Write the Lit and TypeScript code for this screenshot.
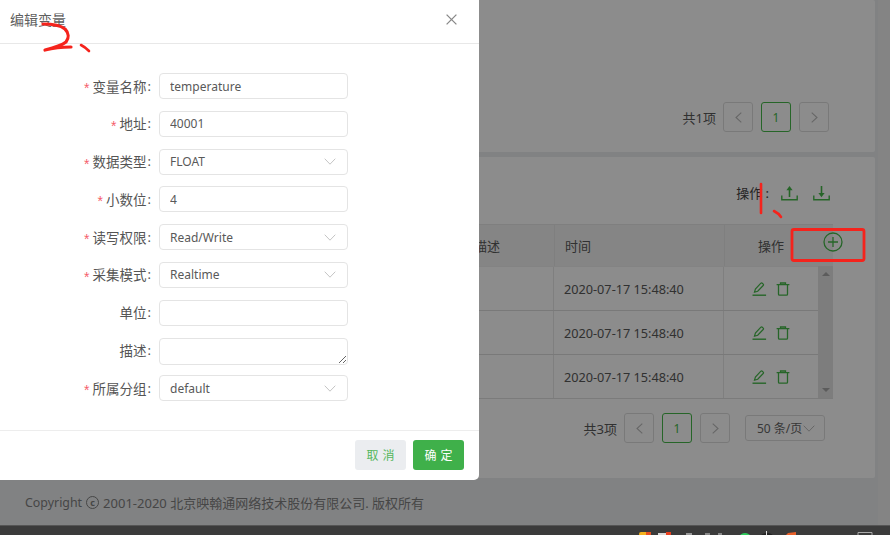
import { LitElement, html, css, svg } from "lit";
import { customElement } from "lit/decorators.js";

const chevron = html`<svg class="chev" viewBox="0 0 12 7"><path d="M.7.7 6 6.2 11.3.7" fill="none" stroke="currentColor" stroke-width="1"/></svg>`;
const arrowL = html`<svg class="arr" viewBox="0 0 7 11"><path d="M6.300.6 1 5.500l5.300 4.900" fill="none" stroke="currentColor" stroke-width="1.1"/></svg>`;
const arrowR = html`<svg class="arr" viewBox="0 0 7 11"><path d="M.7.6 6 5.500.7 10.400" fill="none" stroke="currentColor" stroke-width="1.1"/></svg>`;
const edit = html`<svg class="ico" viewBox="0 0 15 14"><path d="M2.5 10.2 3.4 7 8.9 1.2a1 1 0 0 1 1.4 0l.9.9a1 1 0 0 1 0 1.4L5.7 9.2z" fill="none" stroke="currentColor" stroke-width="1.2"/><path d="M.5 13.2h13.6" stroke="currentColor" stroke-width="1.4"/></svg>`;
const trash = html`<svg class="ico trash" viewBox="0 0 14 14"><path d="M.6 2.600h12.800M4.500 2.400V1h5v1.400M2.500 2.800v9.400a1 1 0 0 0 1 1h7a1 1 0 0 0 1-1V2.800" fill="none" stroke="currentColor" stroke-width="1.3"/></svg>`;
const upload = html`<svg class="tool" viewBox="0 0 17 16"><path d="M8.500 12V3" stroke="currentColor" stroke-width="1.600"/><path d="M5.400 5.200 8.500 1l3.100 4.200z" fill="currentColor"/><path d="M.8 10.500v4.200h15.400v-4.200" fill="none" stroke="currentColor" stroke-width="1.400"/></svg>`;
const download = html`<svg class="tool" viewBox="0 0 17 16"><path d="M8.500 1v8" stroke="currentColor" stroke-width="1.600"/><path d="M5.400 8 8.500 12.200 11.600 8z" fill="currentColor"/><path d="M.8 10.500v4.200h15.400v-4.200" fill="none" stroke="currentColor" stroke-width="1.400"/></svg>`;

@customElement("app-root")
export class AppRoot extends LitElement {
  static styles = css`
    :host { display: block; width: 890px; height: 535px; position: relative; overflow: hidden;
      font-family: "Noto Sans", "Noto Sans CJK SC", sans-serif; color: #595959; font-size: 12px; }
    * { box-sizing: border-box; }
    .page { height: 525px; background: linear-gradient(to right, #ebedef 878px, #f0f0f0 878px); display: flex; flex-direction: column; padding-right: 15px; padding-left: 20px; }
    .card { background: #fff; border-radius: 2px; }
    .card1 { height: 152px; display: flex; justify-content: flex-end; align-items: flex-end; padding: 0 46px 20px 0; }
    .card2 { height: 321px; margin-top: 5px; padding: 26px 42px 0 0; display: flex; flex-direction: column; }
    .foot { flex: 1; display: flex; align-items: center; padding: 2px 0 0 5px; font-size: 13px; color: #808080; white-space: nowrap; }
    .foot .en { font-size: 12.4px; }
    .foot .c { width: 13px; height: 13px; border: 1.4px solid #808080; border-radius: 50%; display: flex; align-items: center; justify-content: center; font-size: 9px; font-weight: 700; line-height: 1; margin: 0 4px 0 4px; padding-bottom: 1px; }
    .pager { display: flex; align-items: center; font-size: 13px; }
    .pager .total { margin-right: 7px; }
    .pbtn { width: 30px; height: 30px; border: 1px solid #ddd; border-radius: 3px; margin-right: 8px; display: flex; align-items: center; justify-content: center; color: #bbb; }
    .pbtn:last-child { margin-right: 0; }
    .pbtn.on { border-color: #46b94a; color: #46b94a; font-size: 12px; }
    .arr { width: 7px; height: 11px; }
    .size { width: 80px; height: 26px; border: 1px solid #ddd; border-radius: 3px; margin-left: 7px; display: flex; align-items: center; padding-left: 11px; white-space: nowrap; font-size: 12px; color: #666; }
    .size .chev { width: 12px; height: 7px; color: #bbb; margin-left: 1px; flex: none; }
    .tools { height: 20px; display: flex; justify-content: flex-end; align-items: center; color: #444; font-size: 13px; margin-right: 3px; margin-bottom: 21px; }
    .tools span { margin-right: 12px; margin-top: -1px; }
    .tool { width: 17px; height: 16px; color: #46b94a; margin-left: 15px; }
    .tool:first-of-type { margin-left: 0; }
    .row { display: grid; grid-template-columns: 1fr 91px 170px 94px; }
    .head { grid-template-columns: 1fr 91px 170px 108px; height: 42px; background: #f2f2f2; border-top: 1px solid #e8e8e8; font-size: 13px; }
    .cell { border-right: 1px solid #e8e8e8; display: flex; align-items: center; padding-left: 10px; }
    .cell:last-child { border-right: 0; }
    .head .last { position: relative; justify-content: flex-end; padding: 0 49px 0 0; }
    .plus { position: absolute; left: 98px; top: 7px; width: 20px; height: 20px; color: #46b94a; }
    .tbody { display: flex; height: 133px; border-bottom: 1px solid #e0e0e0; }
    .rows { flex: 1; }
    .tr { height: 44px; border-top: 1px solid #dcdcdc; font-size: 12.7px; }
    .tr:first-child { height: 44px; border-top-color: #eee; }
    .ops { justify-content: center; gap: 9px; padding-left: 1px; padding-right: 1px; color: #46b94a; }
    .ico { width: 15px; height: 14px; }
    .ico.trash { width: 14px; }
    .sb { width: 15px; background: #e3e3e3; display: flex; flex-direction: column; justify-content: space-between; align-items: center; padding: 6px 0; }
    .sb i { width: 0; height: 0; border: 4px solid transparent; }
    .sb .up { border-bottom: 4px solid #a8a8a8; border-top: 0; }
    .sb .dn { border-top: 4px solid #a8a8a8; border-bottom: 0; }
    .pager2 { justify-content: flex-end; margin-top: 14px; padding-right: 8px; }
    .taskbar { height: 10px; background: #3b3b3b; border-top: 1px solid #555; display: flex; overflow: hidden; }
    .taskbar svg { width: 890px; height: 10px; flex: none; }
    .mask { position: absolute; left: 0; top: 0; right: 0; height: 525px; background: rgba(0,0,0,.45); }
    .modal { position: absolute; left: 0; top: 0; width: 479px; height: 480px; background: #fff; border-radius: 0 0 5px 0; display: flex; flex-direction: column; }
    .mhead { height: 44px; border-bottom: 1px solid #e8e8e8; display: flex; align-items: center; justify-content: space-between; padding: 0 22px 0 10px; font-size: 14px; color: #5f5f5f; flex: none; }
    .x { width: 11px; height: 11px; color: #888; margin-top: -5px; }
    .title { margin-top: -6px; }
    .form { flex: 1; padding-top: 29px; display: grid; grid-template-columns: 152px 189px; column-gap: 7px; grid-auto-rows: 26px; row-gap: 11.8px; align-content: start; }
    .label { display: flex; justify-content: flex-end; align-items: center; font-size: 13.5px; color: #555; white-space: nowrap; padding-bottom: 1px; }
    .colon { margin-left: 1px; margin-right: 1px; font-size: 13px; }
    .req { color: #f5606b; margin: 5px 3px 0 0; font-size: 14px; line-height: 1; font-family: "Liberation Sans", sans-serif; }
    .ctl { width: 189px; height: 26px; border: 1px solid #e4e4e4; border-radius: 4px; padding: 0 10px; font: inherit; font-size: 12px; color: #595959; background: #fff; outline: none; display: flex; align-items: center; justify-content: space-between; }
    textarea.ctl { height: 27px; display: block; padding-top: 4px; }
    .ctl .chev { width: 12px; height: 7px; color: #c4c4c4; margin-right: 1px; }
    .mfoot { height: 50px; border-top: 1px solid #ededed; display: flex; justify-content: flex-end; align-items: flex-start; gap: 7px; padding: 9px 15px 0 0; flex: none; }
    .btn { width: 51px; height: 30px; border: 0; border-radius: 3px; font: inherit; font-size: 12px; letter-spacing: 4px; display: flex; align-items: center; justify-content: center; padding: 0 0 0 4px; }
    .cancel { background: #ebedf0; color: #55b75c; }
    .ok { background: #3fb04a; color: #fff; }
    .ink { position: absolute; left: 0; top: 0; width: 890px; height: 535px; pointer-events: none; }
  `;

  private field(label: string, req: boolean, control: unknown) {
    return html`<div class="label">${req ? html`<span class="req">*</span>` : ""}${label}<span class="colon">:</span></div>${control}`;
  }
  private sel(v: string) {
    return html`<div class="ctl"><span>${v}</span>${chevron}</div>`;
  }
  private inp(v: string) {
    return html`<input class="ctl" .value=${v} />`;
  }

  render() {
    const tr = html`<div class="row tr">
      <div class="cell"></div><div class="cell"></div>
      <div class="cell">2020-07-17 15:48:40</div>
      <div class="cell ops">${edit}${trash}</div>
    </div>`;
    return html`
      <div class="page">
        <div class="card card1">
          <div class="pager">
            <span class="total">共1项</span>
            <div class="pbtn">${arrowL}</div><div class="pbtn on">1</div><div class="pbtn">${arrowR}</div>
          </div>
        </div>
        <div class="card card2">
          <div class="tools"><span>操作 :</span>${upload}${download}</div>
          <div class="row head">
            <div class="cell"></div>
            <div class="cell">描述</div>
            <div class="cell">时间</div>
            <div class="cell last">操作
              <svg class="plus" viewBox="0 0 20 20"><circle cx="10" cy="10" r="9" fill="none" stroke="currentColor" stroke-width="1.3"/><path d="M10 5v10M5 10h10" stroke="currentColor" stroke-width="1.3"/></svg>
            </div>
          </div>
          <div class="tbody">
            <div class="rows">${tr}${tr}${tr}</div>
            <div class="sb"><i class="up"></i><i class="dn"></i></div>
          </div>
          <div class="pager pager2">
            <span class="total">共3项</span>
            <div class="pbtn">${arrowL}</div><div class="pbtn on">1</div><div class="pbtn">${arrowR}</div>
            <div class="size">50 条/页${chevron}</div>
          </div>
        </div>
        <div class="foot"><span class="en">Copyright</span><span class="c">c</span>2001-2020 北京映翰通网络技术股份有限公司. 版权所有</div>
      </div>
      <div class="taskbar">
        <svg viewBox="0 0 890 10">
          ${svg`<rect x="639" y="6" width="12" height="4" rx="2" fill="#f4b21e"/><rect x="646" y="6" width="5" height="3" fill="#e8501e"/>
          <rect x="658" y="7" width="10" height="3" fill="#d8d8d8"/><rect x="666" y="6" width="5" height="3" fill="#e8401e"/>
          <rect x="686" y="7" width="6" height="3" fill="#999"/><rect x="705" y="7" width="5" height="3" fill="#888"/><rect x="718" y="7" width="4" height="3" fill="#888"/>
          <ellipse cx="745" cy="10" rx="5" ry="3" fill="#2ecc5c"/><ellipse cx="767" cy="10" rx="6" ry="3" fill="#222"/><rect x="766" y="5" width="1" height="5" fill="#ddd"/>
          <path d="M785 10l3-3 8-1v4z" fill="#e8602a"/>
          <path d="M858 10V6.500h14V10" fill="none" stroke="#aaa"/>`}
        </svg>
      </div>
      <div class="mask"></div>
      <div class="modal">
        <div class="mhead">
          <span class="title">编辑变量</span>
          <svg class="x" viewBox="0 0 11 11"><path d="M.6.6l9.800 9.800M10.400.6.6 10.400" stroke="currentColor" stroke-width="1.300"/></svg>
        </div>
        <div class="form">
          ${this.field("变量名称", true, this.inp("temperature"))}
          ${this.field("地址", true, this.inp("40001"))}
          ${this.field("数据类型", true, this.sel("FLOAT"))}
          ${this.field("小数位", true, this.inp("4"))}
          ${this.field("读写权限", true, this.sel("Read/Write"))}
          ${this.field("采集模式", true, this.sel("Realtime"))}
          ${this.field("单位", false, this.inp(""))}
          ${this.field("描述", false, html`<textarea class="ctl"></textarea>`)}
          ${this.field("所属分组", true, this.sel("default"))}
        </div>
        <div class="mfoot">
          <button class="btn cancel">取消</button>
          <button class="btn ok">确定</button>
        </div>
      </div>
      <svg class="ink" viewBox="0 0 890 535">
        <g fill="none" stroke="#f5231c" stroke-linecap="round" stroke-linejoin="round">
          <path d="M43 24c8 0 17 1 22 5 4 4 4 9 1 13-5 4-13 6-21 8 8-2 16-3 26-3" stroke-width="3.200"/>
          <path d="M81 45c2 1 5 3 8 6" stroke-width="2.600"/>
          <path d="M761 184v29" stroke-width="2.600"/>
          <path d="M774 211c2 1 5 3 7 6" stroke-width="2.600"/>
          <rect x="792" y="229.500" width="72" height="31" rx="2" stroke-width="2.800"/>
        </g>
      </svg>
    `;
  }
}
